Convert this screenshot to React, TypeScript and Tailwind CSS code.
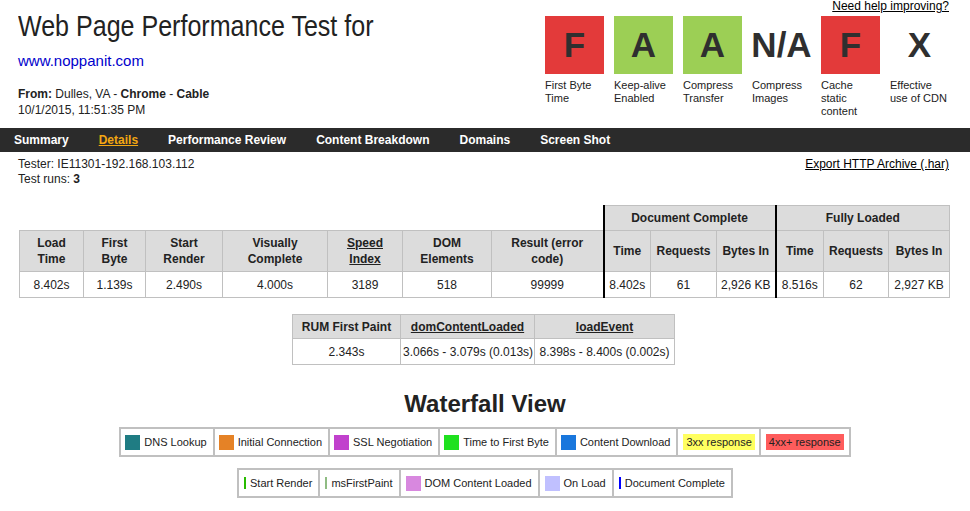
import React from "react";

const font = { fontFamily: '"Liberation Sans", Arial, sans-serif' };

type Grade = { letter: string; bg: string; label: string };

const grades: Grade[] = [
  { letter: "F", bg: "bg-[#e33a3a]", label: "First Byte Time" },
  { letter: "A", bg: "bg-[#9ccf55]", label: "Keep-alive Enabled" },
  { letter: "A", bg: "bg-[#9ccf55]", label: "Compress Transfer" },
  { letter: "N/A", bg: "bg-transparent", label: "Compress Images" },
  { letter: "F", bg: "bg-[#e33a3a]", label: "Cache static content" },
  { letter: "X", bg: "bg-transparent", label: "Effective use of CDN" },
];

const navItems = ["Summary", "Details", "Performance Review", "Content Breakdown", "Domains", "Screen Shot"];

function Swatch({ color }: { color: string }) {
  return <span className={`inline-block w-[15px] h-[15px] ${color}`} />;
}

function Line({ color }: { color: string }) {
  return <span className={`inline-block w-[2px] h-[12px] ${color}`} />;
}

export default function App() {
  const th = "border border-[#c0c0c0] bg-[#dcdcdc] font-bold text-center leading-[16px] px-[2px]";
  const td = "border border-[#c0c0c0] text-center leading-[16px] px-[2px]";
  const thick = "border-l-2 border-l-black";
  return (
    <div style={font} className="w-[970px] h-[511px] overflow-hidden bg-white text-[#222]">
      {/* Header */}
      <div className="flex justify-between h-[128px]">
        <div className="pl-[18px]">
          <div className="pt-[11px] text-[30px] leading-[30px] text-[#222] whitespace-nowrap">
            <span className="inline-block origin-left scale-x-[0.835]">Web Page Performance Test for</span>
          </div>
          <div className="mt-[11px] text-[15px] leading-[18px] text-[#0000cc]">www.noppanit.com</div>
          <div className="mt-[16px] text-[12px] leading-[16px]">
            <b>From:</b> Dulles, VA - <b>Chrome</b> - <b>Cable</b>
          </div>
          <div className="text-[12px] leading-[16px]">10/1/2015, 11:51:35 PM</div>
        </div>
        <div className="pr-[21px] w-[425px] flex flex-col">
          <div className="text-right text-[12px] leading-[12px] underline text-black">Need help improving?</div>
          <div className="mt-[4px] flex gap-[10px]">
            {grades.map((g, i) => (
              <div key={i} className="w-[59px]">
                <div className={`h-[58px] flex items-center justify-center ${g.bg} text-[35px] font-bold text-[#2f2f2f]`}>
                  {g.letter}
                </div>
                <div className="mt-[5px] text-[11px] leading-[13px] text-[#222]">{g.label}</div>
              </div>
            ))}
          </div>
        </div>
      </div>

      {/* Nav */}
      <div className="h-[24px] bg-[#2b2b2b] flex items-center pl-[14px] gap-[30px] text-[12px] font-bold">
        {navItems.map((n) => (
          <span key={n} className={n === "Details" ? "text-[#f3a712] underline" : "text-white"}>
            {n}
          </span>
        ))}
      </div>

      {/* Tester line */}
      <div className="mt-[5px] flex justify-between pl-[18px] pr-[21px] text-[12px] leading-[15px]">
        <div>
          <div>Tester: IE11301-192.168.103.112</div>
          <div>
            Test runs: <b>3</b>
          </div>
        </div>
        <div className="underline text-black">Export HTTP Archive (.har)</div>
      </div>

      {/* Main table */}
      <table className="mt-[18px] ml-[19px] w-[930px] table-fixed border-collapse text-[12px]">
        <colgroup>
          <col className="w-[64px]" />
          <col className="w-[62px]" />
          <col className="w-[77px]" />
          <col className="w-[105px]" />
          <col className="w-[75px]" />
          <col className="w-[89px]" />
          <col className="w-[112px]" />
          <col className="w-[47px]" />
          <col className="w-[66px]" />
          <col className="w-[59px]" />
          <col className="w-[48px]" />
          <col className="w-[65px]" />
          <col className="w-[61px]" />
        </colgroup>
        <tbody>
          <tr className="h-[25px]">
            <td colSpan={7} className="border-0"></td>
            <th colSpan={3} className={`${th} ${thick}`}>Document Complete</th>
            <th colSpan={3} className={`${th} ${thick}`}>Fully Loaded</th>
          </tr>
          <tr className="h-[41px]">
            <th className={th}>Load<br />Time</th>
            <th className={th}>First<br />Byte</th>
            <th className={th}>Start<br />Render</th>
            <th className={th}>Visually<br />Complete</th>
            <th className={th}><span className="underline">Speed<br />Index</span></th>
            <th className={th}>DOM<br />Elements</th>
            <th className={th}>Result (error<br />code)</th>
            <th className={`${th} ${thick}`}>Time</th>
            <th className={th}>Requests</th>
            <th className={th}>Bytes In</th>
            <th className={`${th} ${thick}`}>Time</th>
            <th className={th}>Requests</th>
            <th className={th}>Bytes In</th>
          </tr>
          <tr className="h-[26px]">
            <td className={td}>8.402s</td>
            <td className={td}>1.139s</td>
            <td className={td}>2.490s</td>
            <td className={td}>4.000s</td>
            <td className={td}>3189</td>
            <td className={td}>518</td>
            <td className={td}>99999</td>
            <td className={`${td} ${thick}`}>8.402s</td>
            <td className={td}>61</td>
            <td className={td}>2,926 KB</td>
            <td className={`${td} ${thick}`}>8.516s</td>
            <td className={td}>62</td>
            <td className={td}>2,927 KB</td>
          </tr>
        </tbody>
      </table>

      {/* RUM table */}
      <table className="mt-[16px] ml-[292px] w-[382px] table-fixed border-collapse text-[12px] whitespace-nowrap">
        <colgroup>
          <col className="w-[108px]" />
          <col className="w-[134px]" />
          <col className="w-[140px]" />
        </colgroup>
        <tbody>
          <tr className="h-[24px]">
            <th className={`${th} px-0`}>RUM First Paint</th>
            <th className={`${th} px-0`}><span className="underline">domContentLoaded</span></th>
            <th className={`${th} px-0`}><span className="underline">loadEvent</span></th>
          </tr>
          <tr className="h-[26px]">
            <td className={`${td} px-0`}>2.343s</td>
            <td className={`${td} px-0`}>3.066s - 3.079s (0.013s)</td>
            <td className={`${td} px-0`}>8.398s - 8.400s (0.002s)</td>
          </tr>
        </tbody>
      </table>

      {/* Waterfall */}
      <div className="mt-[25px] text-center text-[24px] leading-[28px] font-bold text-[#222]">Waterfall View</div>

      <div className="mt-[9px] flex justify-center">
        <div className="flex border-2 border-[#c0c0c0] h-[30px] text-[11px] text-[#222]">
          {[
            { c: "bg-[#1f7c83]", t: "DNS Lookup" },
            { c: "bg-[#e58226]", t: "Initial Connection" },
            { c: "bg-[#c141cd]", t: "SSL Negotiation" },
            { c: "bg-[#1fe11f]", t: "Time to First Byte" },
            { c: "bg-[#1977dd]", t: "Content Download" },
          ].map((it, i) => (
            <div key={i} className={`flex items-center gap-[4px] pl-[4px] pr-[6px] ${i > 0 ? "border-l-2 border-[#c0c0c0]" : ""}`}>
              <Swatch color={it.c} />
              <span>{it.t}</span>
            </div>
          ))}
          <div className="flex items-center pl-[5px] pr-[4px] border-l-2 border-[#c0c0c0]">
            <span className="bg-[#ffff60] px-[3px] leading-[16px]">3xx response</span>
          </div>
          <div className="flex items-center pl-[5px] pr-[5px] border-l-2 border-[#c0c0c0]">
            <span className="bg-[#fe5c5c] px-[3px] leading-[16px]">4xx+ response</span>
          </div>
        </div>
      </div>

      <div className="mt-[11px] flex justify-center">
        <div className="flex border-2 border-[#c0c0c0] h-[30px] text-[11px] text-[#222]">
          <div className="flex items-center gap-[4px] pl-[5px] pr-[6px]">
            <Line color="bg-[#28bc00]" />
            <span>Start Render</span>
          </div>
          <div className="flex items-center gap-[4px] pl-[5px] pr-[6px] border-l-2 border-[#c0c0c0]">
            <Line color="bg-[#8fbc83]" />
            <span>msFirstPaint</span>
          </div>
          <div className="flex items-center gap-[4px] pl-[5px] pr-[6px] border-l-2 border-[#c0c0c0]">
            <Swatch color="bg-[#d888df]" />
            <span>DOM Content Loaded</span>
          </div>
          <div className="flex items-center gap-[4px] pl-[5px] pr-[6px] border-l-2 border-[#c0c0c0]">
            <Swatch color="bg-[#c0c0ff]" />
            <span>On Load</span>
          </div>
          <div className="flex items-center gap-[4px] pl-[5px] pr-[6px] border-l-2 border-[#c0c0c0]">
            <Line color="bg-[#0000ff]" />
            <span>Document Complete</span>
          </div>
        </div>
      </div>
    </div>
  );
}
